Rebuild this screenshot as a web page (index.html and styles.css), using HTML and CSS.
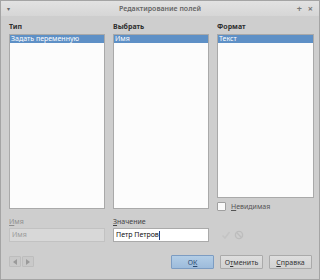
FILE: index.html
```html
<!DOCTYPE html>
<html lang="ru">
<head>
    <meta charset="UTF-8">
    <title>Редактирование полей</title>
    <link rel="stylesheet" href="styles.css">
</head>
<body>
    <div class="window">
        <div class="titlebar">
            <span class="menu-arrow">&#9662;</span>
            <span class="title">Редактирование полей</span>
            <span class="title-btns"><span>+</span><span>&#215;</span></span>
        </div>

        <div class="content">
            <div class="columns">
                <div class="column">
                    <div class="col-label">Тип</div>
                    <div class="listbox tall">
                        <div class="item selected">Задать переменную</div>
                    </div>
                </div>
                <div class="column">
                    <div class="col-label">Выбрать</div>
                    <div class="listbox tall">
                        <div class="item selected">Имя</div>
                    </div>
                </div>
                <div class="column">
                    <div class="col-label">Формат</div>
                    <div class="listbox short">
                        <div class="item selected">Текст</div>
                    </div>
                    <label class="check-row">
                        <span class="checkbox"></span>
                        <span><u>Н</u>евидимая</span>
                    </label>
                </div>
            </div>

            <div class="columns fields">
                <div class="column">
                    <div class="field-label disabled"><u>И</u>мя</div>
                    <div class="input disabled">Имя</div>
                </div>
                <div class="column">
                    <div class="field-label"><u>З</u>начение</div>
                    <div class="input active">Петр Петров<span class="caret"></span></div>
                </div>
                <div class="column icons">
                    <svg width="10" height="10" viewBox="0 0 10 10">
                        <path d="M1.5 5.5 L4 8 L8.5 2" fill="none" stroke="#c4c4c4" stroke-width="1.6"/>
                    </svg>
                    <svg width="10" height="10" viewBox="0 0 10 10">
                        <circle cx="5" cy="5" r="3.6" fill="none" stroke="#bdbdbd" stroke-width="1.4"/>
                        <path d="M2.6 2.6 L7.4 7.4" stroke="#bdbdbd" stroke-width="1.4"/>
                    </svg>
                </div>
            </div>

            <div class="footer">
                <div class="nav">
                    <button class="nav-btn"><span class="tri left"></span></button>
                    <button class="nav-btn"><span class="tri right"></span></button>
                </div>
                <div class="buttons">
                    <button class="btn default">О<u>К</u></button>
                    <button class="btn">О<u>т</u>менить</button>
                    <button class="btn"><u>С</u>правка</button>
                </div>
            </div>
        </div>
    </div>
</body>
</html>
```

FILE: styles.css
```css
body {
    margin: 0;
    font-family: 'Noto Sans', 'DejaVu Sans', sans-serif;
    font-size: 7px;
    background: #cecece;
}

.window {
    width: 320px;
    height: 280px;
    box-sizing: border-box;
    border: 1px solid #a4a4a4;
    background: #cecece;
    display: flex;
    flex-direction: column;
}

.titlebar {
    height: 15px;
    display: flex;
    align-items: center;
    justify-content: space-between;
    padding: 0 6px 0 6px;
    background: linear-gradient(#e2e2e2, #d6d6d6);
    color: #555;
    font-size: 7px;
}

.menu-arrow {
    font-size: 6px;
    color: #666;
    width: 20px;
}

.title {
    font-weight: 600;
    color: #666;
}

.title-btns {
    display: flex;
    gap: 6px;
    width: 20px;
    justify-content: flex-end;
    color: #777;
    font-size: 9px;
    font-weight: bold;
}

.content {
    flex: 1;
    padding: 5px 7px 0 8px;
    display: flex;
    flex-direction: column;
}

.columns {
    display: grid;
    grid-template-columns: 96px 96px 97px;
    gap: 8px;
}

.column {
    display: flex;
    flex-direction: column;
}

.col-label {
    font-weight: bold;
    color: #2e2e2e;
    height: 12px;
    line-height: 12px;
    margin-bottom: 1px;
}

.listbox {
    background: #fcfcfc;
    border: 1px solid #a9a9a9;
    box-sizing: border-box;
}

.listbox.tall {
    height: 175px;
}

.listbox.short {
    height: 164px;
}

.item {
    height: 8px;
    line-height: 8px;
    padding-left: 1px;
    color: #222;
}

.item.selected {
    background: #5e90c6;
    color: #fff;
}

.check-row {
    display: flex;
    align-items: center;
    gap: 5px;
    margin-top: 4px;
    color: #555;
}

.checkbox {
    width: 7px;
    height: 7px;
    border: 1px solid #a0a0a0;
    border-radius: 1px;
    background: #fafafa;
}

.fields {
    margin-top: 6px;
}

.field-label {
    height: 10px;
    line-height: 10px;
    color: #444;
    margin-bottom: 1px;
}

.field-label.disabled {
    color: #8e8e8e;
}

.input {
    height: 14px;
    line-height: 12px;
    box-sizing: border-box;
    border: 1px solid #b0b0b0;
    padding-left: 2px;
    background: #fff;
    color: #111;
}

.input.disabled {
    background: #d8d8d8;
    border-color: #c2c2c2;
    color: #9a9a9a;
}

.input.active {
    border-color: #aaa;
}

.caret {
    display: inline-block;
    width: 1px;
    height: 9px;
    background: #1d3f8a;
    vertical-align: middle;
}

.column.icons {
    flex-direction: row;
    align-items: flex-end;
    gap: 3px;
    padding-left: 4px;
    padding-bottom: 2px;
}

.footer {
    margin-top: 13px;
    display: flex;
    justify-content: space-between;
    align-items: flex-start;
}

.nav {
    display: flex;
    gap: 1px;
    margin-top: 1px;
}

.nav-btn {
    width: 12px;
    height: 11px;
    padding: 0;
    border: 1px solid #bdbdbd;
    border-radius: 1px;
    background: #c9c9c9;
    display: flex;
    align-items: center;
    justify-content: center;
}

.tri {
    width: 0;
    height: 0;
    border-top: 3px solid transparent;
    border-bottom: 3px solid transparent;
}

.tri.left {
    border-right: 4px solid #9a9a9a;
}

.tri.right {
    border-left: 4px solid #9a9a9a;
}

.buttons {
    display: flex;
    gap: 6px;
}

.btn {
    height: 14px;
    width: 43px;
    padding: 0;
    font-family: inherit;
    font-size: 7px;
    color: #333;
    background: linear-gradient(#dedede, #d2d2d2);
    border: 1px solid #aaa;
    border-radius: 1px;
}

.btn.default {
    background: linear-gradient(#b3cde6, #9dbbdb);
    border-color: #7c9cc2;
    color: #2b4a70;
}
```
